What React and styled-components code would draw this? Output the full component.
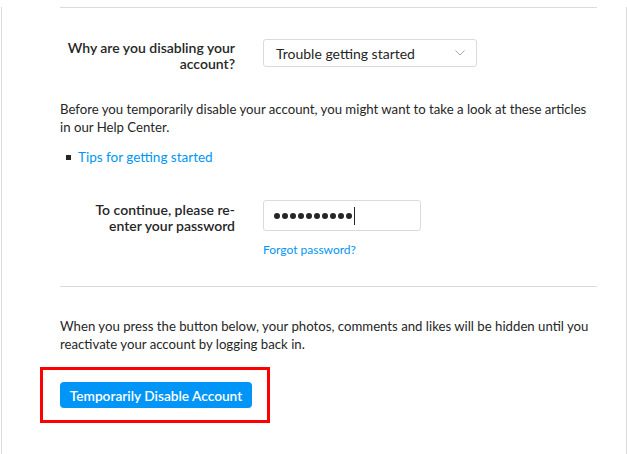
import React from "react";
import styled, { createGlobalStyle } from "styled-components";

const Global = createGlobalStyle`
  html, body { margin: 0; padding: 0; background: #fff; }
  body { font-family: Lato, "Open Sans", sans-serif; color: #262626; }
  * { box-sizing: border-box; }
`;

const Card = styled.div`
  margin-left: 1px;
  width: 626px;
  height: 453px;
  border: 1px solid #dbdbdb;
  border-top: none;
  padding: 0 29px 0 58px;
  font-size: 13.2px;
`;

const Divider = styled.div`
  height: 1px;
  background: #dbdbdb;
  margin-top: ${(p) => p.$top}px;
`;

const FormRow = styled.div`
  display: flex;
  align-items: flex-start;
  gap: 28px;
  margin-top: ${(p) => p.$top}px;
`;

const Label = styled.label`
  width: 175px;
  flex: none;
  text-align: right;
  font-weight: 600;
  font-size: 14px;
  line-height: 16px;
  padding-top: ${(p) => p.$pad}px;
`;

const Control = styled.div`
  display: flex;
  flex-direction: column;
  align-items: flex-start;
`;

const Select = styled.div`
  width: 214px;
  height: 28px;
  border: 1px solid #dbdbdb;
  border-radius: 3px;
  display: flex;
  align-items: center;
  justify-content: space-between;
  padding: 0 11px 0 12px;
  font-size: 14px;
  color: #262626;
`;

const PasswordBox = styled.div`
  width: 158px;
  height: 31px;
  border: 1px solid #dbdbdb;
  border-radius: 3px;
  display: flex;
  align-items: center;
  padding-left: 10px;
  gap: 2px;
`;

const Dot = styled.span`
  width: 6px;
  height: 6px;
  border-radius: 50%;
  background: #262626;
  flex: none;
`;

const Caret = styled.span`
  width: 1px;
  height: 18px;
  background: #262626;
`;

const SmallLink = styled.a`
  margin-top: 11px;
  font-size: 12px;
  line-height: 16px;
  color: #0095f6;
  text-decoration: none;
`;

const Paragraph = styled.p`
  margin: ${(p) => p.$top}px 0 0;
  line-height: 18px;
  font-size: 13.2px;
`;

const Bullets = styled.ul`
  list-style: none;
  margin: 12px 0 0;
  padding: 0 0 0 6px;
`;

const Bullet = styled.li`
  display: flex;
  align-items: center;
  gap: 7px;
  line-height: 18px;
  &::before {
    content: "";
    width: 5px;
    height: 5px;
    background: #262626;
    flex: none;
  }
`;

const Link = styled.a`
  color: #0095f6;
  text-decoration: none;
  font-size: 13.5px;
`;

const Highlight = styled.div`
  margin: 14px 0 0 -20px;
  width: 230px;
  height: 56px;
  border: 3px solid #ff0000;
  padding: 12px 0 0 17px;
`;

const Button = styled.button`
  width: 192px;
  height: 26px;
  border: none;
  border-radius: 4px;
  background: #0095f6;
  color: #fff;
  font-family: inherit;
  font-weight: 600;
  font-size: 13.7px;
  padding: 0;
  cursor: pointer;
`;

function Chevron() {
  return (
    <svg width="10" height="6" viewBox="0 0 10 6" fill="none">
      <path d="M0.5 0.5 L5 5 L9.5 0.5" stroke="#a8a8a8" strokeWidth="1" />
    </svg>
  );
}

export default function App() {
  return (
    <>
      <Global />
      <Card>
        <Divider $top={7} />
        <FormRow $top={31}>
          <Label $pad={1}>
            Why are you disabling your
            <br />
            account?
          </Label>
          <Control>
            <Select>
              <span>Trouble getting started</span>
              <Chevron />
            </Select>
          </Control>
        </FormRow>
        <Paragraph $top={28}>
          Before you temporarily disable your account, you might want to take a look at these articles in our Help Center.
        </Paragraph>
        <Bullets>
          <Bullet>
            <Link href="#">Tips for getting started</Link>
          </Bullet>
        </Bullets>
        <FormRow $top={34}>
          <Label $pad={2}>
            To continue, please re-
            <br />
            enter your password
          </Label>
          <Control>
            <PasswordBox>
              {Array.from({ length: 10 }).map((_, i) => (
                <Dot key={i} />
              ))}
              <Caret />
            </PasswordBox>
            <SmallLink href="#">Forgot password?</SmallLink>
          </Control>
        </FormRow>
        <Divider $top={28} />
        <Paragraph $top={30}>
          When you press the button below, your photos, comments and likes will be hidden until you reactivate your account by logging back in.
        </Paragraph>
        <Highlight>
          <Button>Temporarily Disable Account</Button>
        </Highlight>
      </Card>
    </>
  );
}
